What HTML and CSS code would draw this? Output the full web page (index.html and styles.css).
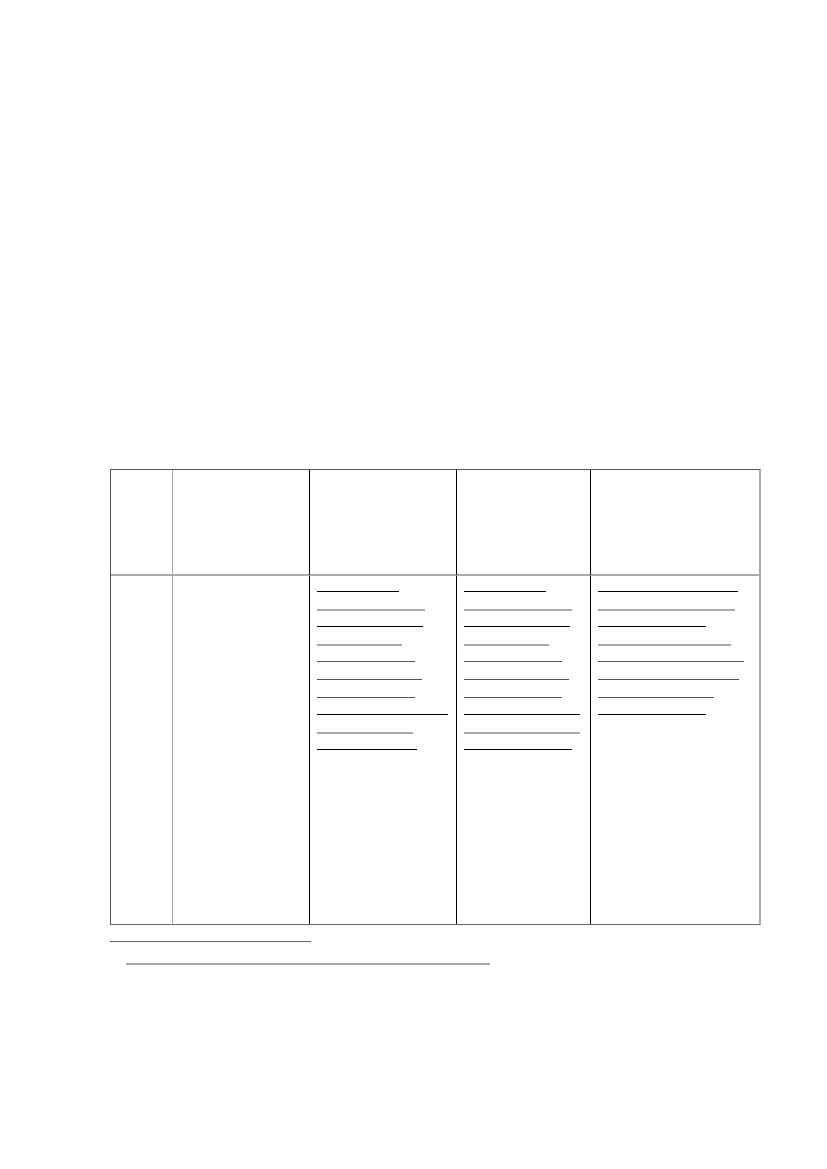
FILE: index.html
```html
<!DOCTYPE html>
<html>
<head>
<meta charset="utf-8">
<link rel="stylesheet" href="styles.css">
</head>
<body>
<div class="page">
  <div class="tbl">
    <div class="cell c1 head"></div>
    <div class="cell c2 head"></div>
    <div class="cell c3 head"></div>
    <div class="cell c4 head"></div>
    <div class="cell c5 head"></div>

    <div class="cell c1 body"></div>
    <div class="cell c2 body"></div>
    <div class="cell c3 body">
      <div class="lines">
        <div class="ul k" style="width:82px"></div>
        <div class="ul g" style="width:108px"></div>
        <div class="ul k" style="width:106px"></div>
        <div class="ul g" style="width:85px"></div>
        <div class="ul d" style="width:98px"></div>
        <div class="ul d" style="width:105px"></div>
        <div class="ul d" style="width:98px"></div>
        <div class="ul k" style="width:131px"></div>
        <div class="ul g" style="width:96px"></div>
        <div class="ul k" style="width:100px"></div>
      </div>
    </div>
    <div class="cell c4 body">
      <div class="lines">
        <div class="ul k" style="width:82px"></div>
        <div class="ul g" style="width:108px"></div>
        <div class="ul k" style="width:106px"></div>
        <div class="ul g" style="width:85px"></div>
        <div class="ul d" style="width:98px"></div>
        <div class="ul d" style="width:105px"></div>
        <div class="ul d" style="width:98px"></div>
        <div class="ul k" style="width:116px"></div>
        <div class="ul g" style="width:116px"></div>
        <div class="ul k" style="width:108px"></div>
      </div>
    </div>
    <div class="cell c5 body">
      <div class="lines">
        <div class="ul k" style="width:140px"></div>
        <div class="ul g" style="width:137px"></div>
        <div class="ul k" style="width:108px"></div>
        <div class="ul g" style="width:133px"></div>
        <div class="ul d" style="width:146px"></div>
        <div class="ul d" style="width:141px"></div>
        <div class="ul d" style="width:116px"></div>
        <div class="ul k" style="width:108px"></div>
      </div>
    </div>
  </div>
  <div class="notes">
    <div class="rule"></div>
    <div class="note"></div>
  </div>
</div>
</body>
</html>
```

FILE: styles.css
```css
html, body {
  margin: 0;
  padding: 0;
  background: #ffffff;
  font-family: "Liberation Serif", serif;
}

.page {
  width: 827px;
  height: 1169px;
  padding: 469px 0 0 110px;
  box-sizing: border-box;
}

.tbl {
  display: grid;
  grid-template-columns: 62px 137px 147px 134px 170px;
  grid-template-rows: 106px 348px;
  width: 651px;
  box-sizing: border-box;
  border-top: 1px solid #555555;
  border-left: 1px solid #555555;
  border-right: 2px solid #aaaaaa;
  border-bottom: 1px solid #666666;
}

.cell {
  box-sizing: border-box;
}

.head {
  border-bottom: 2px solid #aaaaaa;
}

.c1 { border-right: 1px solid #aaaaaa; }
.c2 { border-right: 1px solid #000000; }
.c3 { border-right: 1px solid #000000; }
.c4 { border-right: 1px solid #000000; }

.c3 .lines { padding-left: 7px; }
.c4 .lines { padding-left: 7px; }
.c5 .lines { padding-left: 7px; }

.lines {
  display: flex;
  flex-direction: column;
  padding-top: 15px;
}

.ul {
  height: 17.6px;
  box-sizing: border-box;
  flex: none;
}

.ul.k { border-top: 1px solid #000000; }
.ul.d { border-top: 1px solid #555555; }
.ul.g { border-top: 2px solid #aaaaaa; }

.notes {
  display: flex;
  flex-direction: column;
  padding-top: 16px;
}

.rule {
  width: 201px;
  height: 0;
  border-top: 1px solid #666666;
}

.note {
  width: 364px;
  height: 0;
  margin: 21px 0 0 16px;
  border-top: 2px solid #aaaaaa;
}
```
